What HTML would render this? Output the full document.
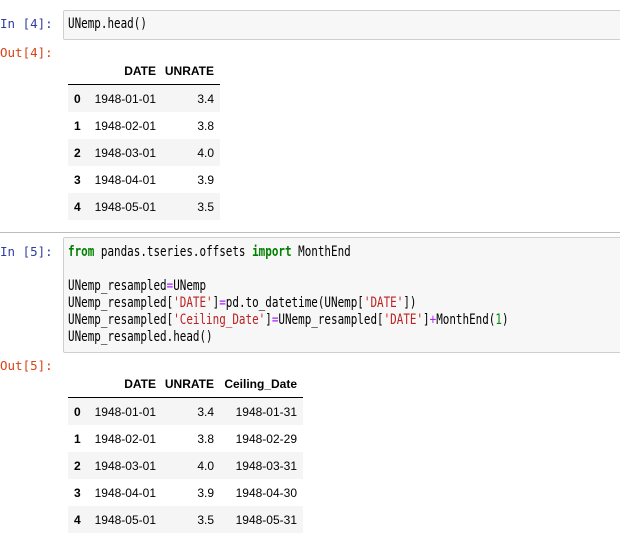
<!DOCTYPE html>
<html><head><style>
body{margin:0;width:620px;height:540px;background:#fff;position:relative;overflow:hidden;font-family:"Liberation Sans",sans-serif;}
.p{position:absolute;font-family:"DejaVu Sans Mono","Liberation Mono",monospace;font-size:12.5px;white-space:pre;}
.in{color:#303f9f;}
.out{color:#d84315;}
.box{position:absolute;left:63px;right:-2px;border:1px solid #cfcfcf;background:#f7f7f7;border-radius:2px;}
.code{position:absolute;left:68px;font-family:"DejaVu Sans Mono","Liberation Mono",monospace;font-size:14px;white-space:pre;line-height:17px;color:#000;transform:scaleX(0.78);transform-origin:0 0;}
.k{color:#008000;font-weight:bold}.s{color:#ba2121}.o{color:#aa22ff}.n{color:#080}
table{position:absolute;left:68px;border-collapse:collapse;font-size:12px;color:#000;table-layout:fixed;}
td,th{height:27px;padding:0 6px 0 0;text-align:right;white-space:nowrap;overflow:visible;}
th{font-weight:bold;}
thead th{border-bottom:1px solid #000;height:26px;}
tbody tr:nth-child(odd){background:#f5f5f5;}
tbody th{text-align:left;padding-left:6px;padding-right:0}
</style></head><body>
<div class="p in" style="left:0;top:16px">In [4]:</div>
<div class="box" style="top:10px;height:28px"></div>
<div class="code" style="top:16px">UNemp.head()</div>
<div class="p out" style="left:0;top:45px">Out[4]:</div>
<table style="top:58px;width:152px">
<colgroup><col style="width:20px"><col style="width:74px"><col style="width:58px"></colgroup>
<thead><tr><th></th><th>DATE</th><th>UNRATE</th></tr></thead>
<tbody>
<tr><th>0</th><td>1948-01-01</td><td>3.4</td></tr>
<tr><th>1</th><td>1948-02-01</td><td>3.8</td></tr>
<tr><th>2</th><td>1948-03-01</td><td>4.0</td></tr>
<tr><th>3</th><td>1948-04-01</td><td>3.9</td></tr>
<tr><th>4</th><td>1948-05-01</td><td>3.5</td></tr>
</tbody></table>
<div style="position:absolute;left:0;right:0;top:232px;height:1px;background:#bdbdbd"></div>
<div class="p in" style="left:0;top:244px">In [5]:</div>
<div class="box" style="top:237px;height:114px"></div>
<div class="code" style="top:244px"><span class="k">from</span> pandas.tseries.offsets <span class="k">import</span> MonthEnd

UNemp_resampled<span class="o">=</span>UNemp
UNemp_resampled[<span class="s">'DATE'</span>]<span class="o">=</span>pd.to_datetime(UNemp[<span class="s">'DATE'</span>])
UNemp_resampled[<span class="s">'Ceiling_Date'</span>]<span class="o">=</span>UNemp_resampled[<span class="s">'DATE'</span>]<span class="o">+</span>MonthEnd(<span class="n">1</span>)
UNemp_resampled.head()</div>
<div class="p out" style="left:0;top:358px">Out[5]:</div>
<table style="top:371px;width:235px">
<colgroup><col style="width:20px"><col style="width:74px"><col style="width:58px"><col style="width:83px"></colgroup>
<thead><tr><th></th><th>DATE</th><th>UNRATE</th><th>Ceiling_Date</th></tr></thead>
<tbody>
<tr><th>0</th><td>1948-01-01</td><td>3.4</td><td>1948-01-31</td></tr>
<tr><th>1</th><td>1948-02-01</td><td>3.8</td><td>1948-02-29</td></tr>
<tr><th>2</th><td>1948-03-01</td><td>4.0</td><td>1948-03-31</td></tr>
<tr><th>3</th><td>1948-04-01</td><td>3.9</td><td>1948-04-30</td></tr>
<tr><th>4</th><td>1948-05-01</td><td>3.5</td><td>1948-05-31</td></tr>
</tbody></table>
</body></html>
